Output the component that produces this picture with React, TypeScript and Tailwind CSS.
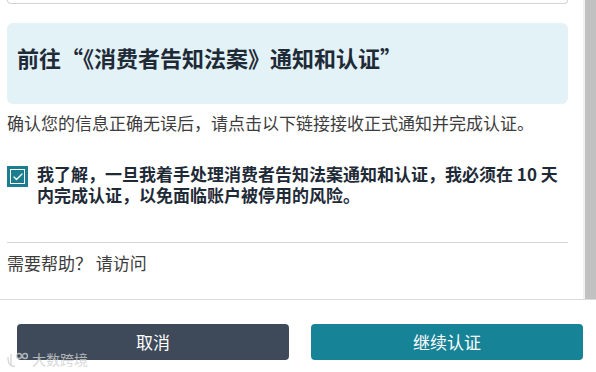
import { Check } from "lucide-react";

const font = { fontFamily: '"Noto Sans CJK SC", "Noto Sans", sans-serif' };

const Scrollbar = () => (
  <div className="w-[13px] shrink-0 bg-[#f1f1f1] pl-[2px]">
    <div className="h-full bg-[#c1c1c1]" />
  </div>
);

const AckCheckbox = () => (
  <div className="mt-[3px] flex h-[21px] w-[21px] shrink-0 items-center justify-center bg-[#1b7d8e]">
    <span className="flex h-[15px] w-[15px] items-center justify-center border border-white">
      <Check size={12} strokeWidth={2.5} className="text-white" />
    </span>
  </div>
);

export default function App() {
  return (
    <div className="relative h-[372px] w-[596px] overflow-hidden bg-white" style={font}>
      <div className="flex h-[300px] border-b border-[#dcdcdc]">
        <div className="flex-1 pl-[7px] pr-[15px]">
          {/* bottom of the card above, scrolled mostly out of view */}
          <div className="h-[4px] rounded-b-lg border border-t-0 border-[#d4d4d4]" />

          <div className="mt-[19px] h-[81px] rounded-md bg-[#e2f2f7] px-[10px] pt-[18px]">
            <h2 className="text-[22px] font-bold leading-[32px] text-[#1f2a37]">
              前往“《消费者告知法案》通知和认证”
            </h2>
          </div>

          <p className="mt-[7px] text-[17px] leading-[24px] text-[#3d3d3d]">
            确认您的信息正确无误后，请点击以下链接接收正式通知并完成认证。
          </p>

          <div className="mt-[28px] flex gap-[9px]">
            <AckCheckbox />
            <p className="pr-[10px] text-[17px] font-bold leading-[21px] text-[#1f2a37]">
              我了解，一旦我着手处理消费者告知法案通知和认证，我必须在 10 天内完成认证，以免面临账户被停用的风险。
            </p>
          </div>

          <div className="mt-[37px] border-t border-[#d6d6d6]" />

          <p className="mt-[10px] text-[17px] leading-[20px] text-[#3d3d3d]">
            需要帮助？ 请访问
          </p>
        </div>
        <Scrollbar />
      </div>

      <div className="flex gap-[22px] pl-[17px] pr-[13px] pt-[24px]">
        <button className="flex h-[36px] flex-1 items-center justify-center rounded-[4px] bg-[#3e4a59] text-[17px] text-white">
          取消
        </button>
        <button className="flex h-[36px] flex-1 items-center justify-center rounded-[4px] bg-[#178397] text-[17px] text-white">
          继续认证
        </button>
      </div>

      {/* watermark */}
      <div className="absolute bottom-[2px] left-[5px] flex items-center gap-[3px] text-[14px] text-[#d0d0d0] opacity-80">
        <svg width="24" height="16" viewBox="0 0 24 16" fill="none" stroke="currentColor" strokeWidth="1.4">
          <path d="M6 2v10c0 2 2 3 4 2" />
          <path d="M3 5c0 5 1 8 4 9" />
          <circle cx="14" cy="4" r="2.5" />
          <circle cx="20" cy="4" r="2.5" />
        </svg>
        <span>大数跨境</span>
      </div>
    </div>
  );
}
